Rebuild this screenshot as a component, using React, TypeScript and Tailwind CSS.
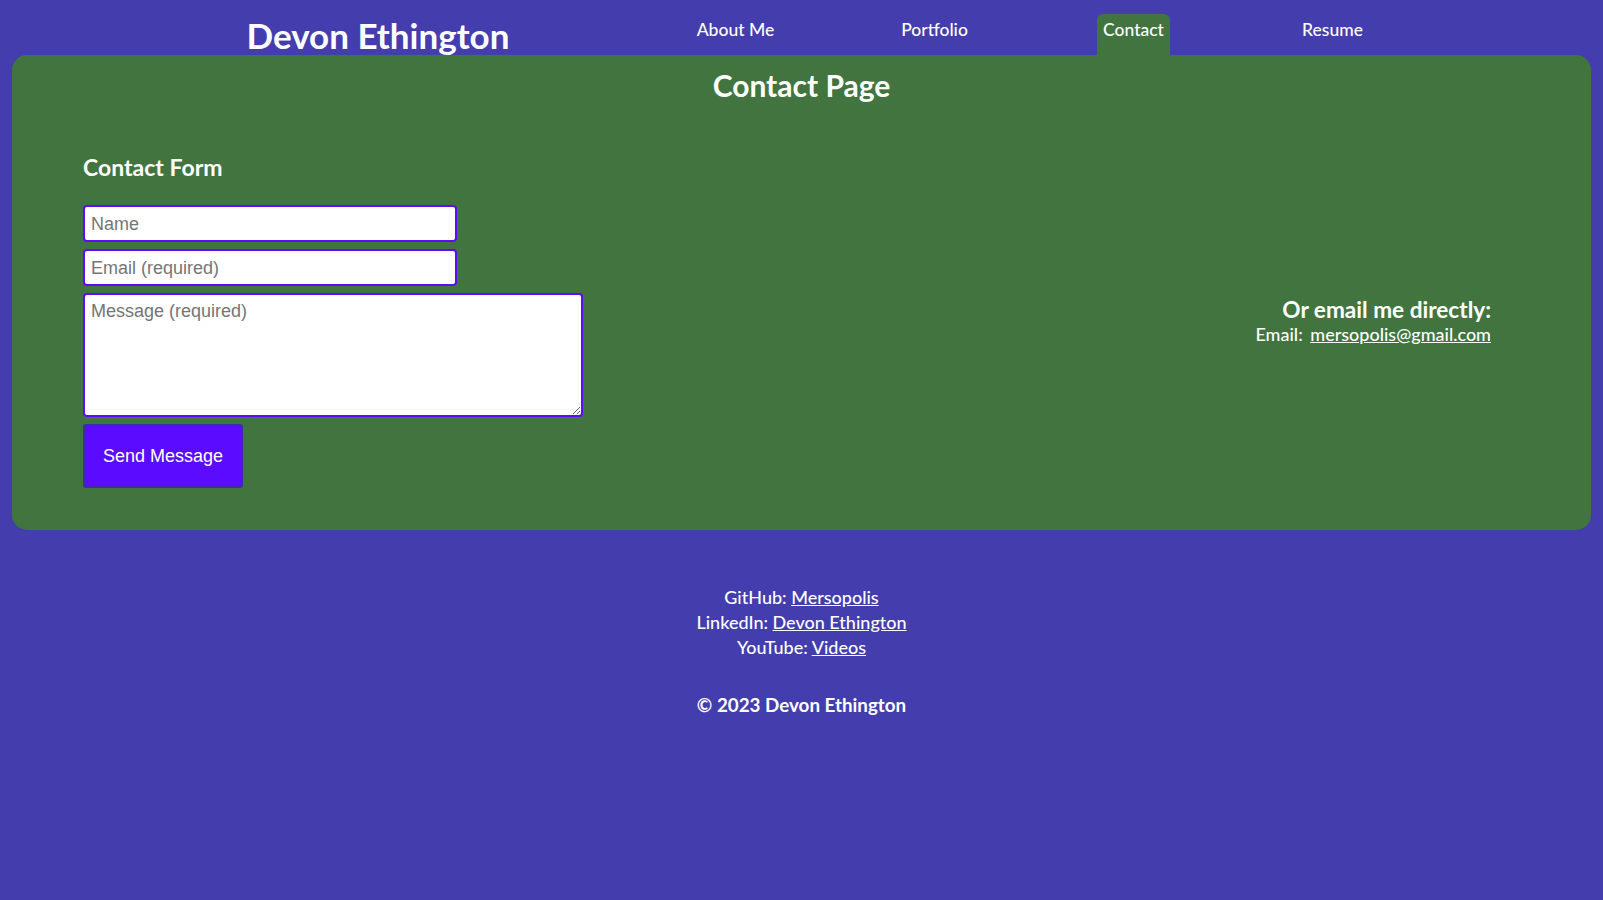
import React from "react";

export default function App() {
  const navItems = ["About Me", "Portfolio", "Contact", "Resume"];
  return (
    <div className="min-h-[900px] bg-[#443dae] text-white font-['Lato',sans-serif]">
      <header className="h-[55px] flex items-start">
        <div className="w-[636px] pl-[120px] flex justify-center">
          <h1 className="mt-[14px] text-[35px] leading-[1.2] font-bold whitespace-nowrap">Devon Ethington</h1>
        </div>
        <ul className="flex">
          {navItems.map((n) => (
            <li key={n} className="w-[199px] flex justify-center">
              <a
                href="#"
                className={
                  "mt-[14px] h-[41px] pt-[5px] px-[6px] rounded-t-[6px] text-[17.5px] leading-[21px] font-medium " +
                  (n === "Contact" ? "bg-[#42743f]" : "")
                }
              >
                {n}
              </a>
            </li>
          ))}
        </ul>
      </header>

      <main className="mx-[12px] h-[475px] rounded-[15px] bg-[#42743f] pt-[12px]">
        <h2 className="text-center text-[30px] leading-[1.2] font-bold">Contact Page</h2>
        <div className="flex items-center justify-between pl-[71px] pr-[100px] mt-[51px]">
          <div className="flex flex-col">
            <h3 className="text-[23px] leading-[1.2] font-bold mb-[23px]">Contact Form</h3>
            <form className="flex flex-col gap-[7px] font-['Liberation_Sans',Arial,sans-serif]">
              <input
                placeholder="Name"
                className="w-[374px] h-[37px] bg-white border-2 border-[#5b0bff] rounded-[4px] pl-[6px] pt-[2px] text-[18px] text-black placeholder:text-[#757575] outline-none"
              />
              <input
                placeholder="Email (required)"
                className="w-[374px] h-[37px] bg-white border-2 border-[#5b0bff] rounded-[4px] pl-[6px] pt-[2px] text-[18px] text-black placeholder:text-[#757575] outline-none"
              />
              <textarea
                placeholder="Message (required)"
                className="w-[500px] h-[124px] bg-white border-2 border-[#5b0bff] rounded-[4px] pl-[6px] pt-[6px] text-[18px] leading-[21px] text-black placeholder:text-[#757575] outline-none"
              />
              <button
                type="button"
                className="w-[160px] h-[64px] bg-[#5b0bff] border-2 border-[#3d2ba8] rounded-[3px] text-white text-[18px] pt-[2px]"
              >
                Send Message
              </button>
            </form>
          </div>
          <div className="flex flex-col items-end">
            <h3 className="text-[22.6px] leading-[1.2] font-bold">Or email me directly:</h3>
            <p className="mt-[1px] text-[18px] leading-[21.6px] font-medium">
              Email:{"  "}
              <a href="#" className="underline ml-[3px]">mersopolis@gmail.com</a>
            </p>
          </div>
        </div>
      </main>

      <footer className="flex flex-col items-center pt-[55px]">
        <div className="flex flex-col items-center text-[18px] leading-[25px] font-medium">
          <p>
            GitHub: <a href="#" className="underline">Mersopolis</a>
          </p>
          <p>
            LinkedIn: <a href="#" className="underline">Devon Ethington</a>
          </p>
          <p>
            YouTube: <a href="#" className="underline">Videos</a>
          </p>
        </div>
        <p className="mt-[32px] text-[18.8px] leading-[25px] font-bold">© 2023 Devon Ethington</p>
      </footer>
    </div>
  );
}
